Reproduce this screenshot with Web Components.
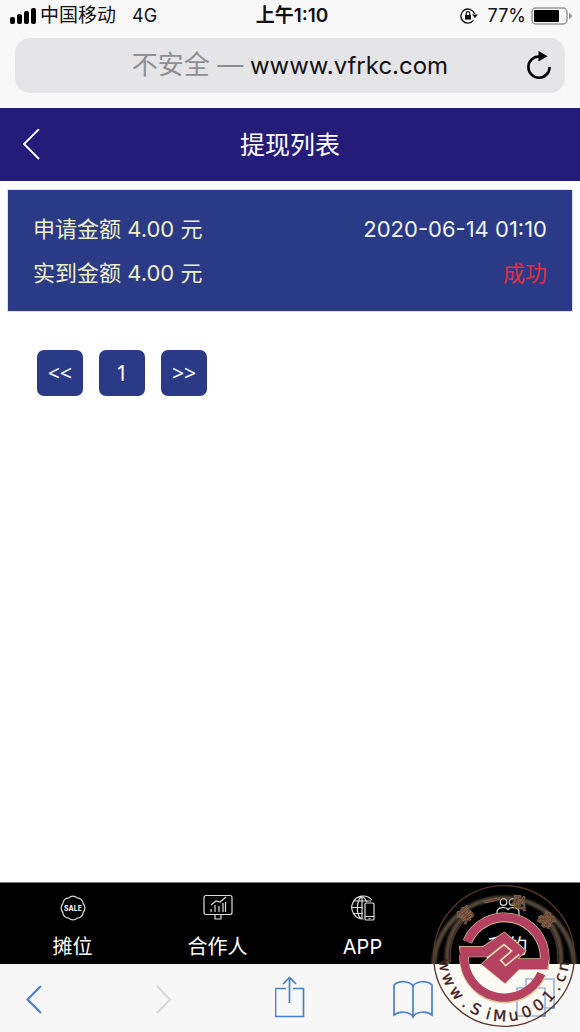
<!DOCTYPE html>
<html lang="zh-CN">
<head>
<meta charset="utf-8">
<meta name="viewport" content="width=device-width, initial-scale=1">
<title>提现列表</title>
<style>
  body { margin: 0; background: #fff; font-family: Inter, "Noto Sans CJK SC", sans-serif; }
</style>
</head>
<body>
<app-screen>
  <status-bar slot="top" carrier="中国移动" network="4G" time="上午1:10" battery="77%"></status-bar>
  <address-bar slot="top" note="不安全 —" host="wwww.vfrkc.com"></address-bar>
  <page-header slot="top">提现列表</page-header>
  <record-card>
    <span slot="apply">申请金额 4.00 元</span>
    <span slot="date">2020-06-14 01:10</span>
    <span slot="paid">实到金额 4.00 元</span>
    <span slot="state">成功</span>
  </record-card>
  <page-nav></page-nav>
  <tab-bar slot="bottom">
    <tab-item icon="sale">摊位</tab-item>
    <tab-item icon="board">合作人</tab-item>
    <tab-item icon="globe">APP</tab-item>
    <tab-item icon="people">我的</tab-item>
  </tab-bar>
  <browser-tools slot="bottom"></browser-tools>
  <seal-mark slot="bottom"></seal-mark>
</app-screen>

<script>
const define = (name, render) => customElements.define(name, class extends HTMLElement {
  constructor() {
    super();
    this.attachShadow({ mode: "open" }).innerHTML = render(this);
  }
});

define("app-screen", () => `
  <style>
    :host { display: flex; flex-direction: column; min-height: 100vh; position: relative; }
    main { flex: 1; padding: 9px 8px; }
  </style>
  <slot name="top"></slot>
  <main><slot></slot></main>
  <slot name="bottom"></slot>`);

define("status-bar", el => `
  <style>
    :host { display: grid; grid-template-columns: 1fr auto 1fr; align-items: center; height: 32px;
      padding: 0 8px 0 12px; background: #f8f8f8; color: #111; font-size: 18px; line-height: 32px; }
    div { display: flex; align-items: center; }
    .net { margin-left: 16px; }
    .carrier { font-size: 19px; margin-left: 4px; }
    .time { font-size: 19px; font-weight: 600; }
    .right { justify-content: flex-end; }
    .lock { margin-right: 10px; }
    .cell { margin-left: 5px; }
    svg { display: block; }
    .bars { margin-left: -3px; }
  </style>
  <div>
    <svg class="bars" width="27" height="16" viewBox="0 0 27 16" aria-hidden="true"><rect x="1" y="9" width="5" height="7" rx="2"/><rect x="8" y="6" width="5" height="10" rx="2"/><rect x="15" y="3" width="5" height="13" rx="2"/><rect x="22" y="0" width="5" height="16" rx="2"/></svg>
    <span class="carrier">${el.getAttribute("carrier")}</span><span class="net">${el.getAttribute("network")}</span>
  </div>
  <div class="time">${el.getAttribute("time")}</div>
  <div class="right">
    <svg class="lock" width="18" height="16" viewBox="0 0 18 16" fill="none" stroke="#111" aria-hidden="true"><path d="M14.6 6A7 7 0 1 0 13.5 12.3" stroke-width="1.4"/><path d="M12 6.5h6l-3 3.6z" fill="#111" stroke="none"/><rect x="5" y="7" width="6" height="4.6" fill="#111" stroke="none"/><path d="M6.2 7V5.5a1.8 1.8 0 0 1 3.6 0V7" stroke-width="1.2"/></svg>
    <span>${el.getAttribute("battery")}</span>
    <svg class="cell" width="41" height="18" viewBox="0 0 41 18" aria-hidden="true"><rect x="1" y="1" width="35" height="16" rx="4" fill="none" stroke="#999" stroke-width="1.5"/><rect x="3" y="3" width="25" height="12" rx="1"/><path d="M38 6v6q3-1 3-3t-3-3z" fill="#999"/></svg>
  </div>`);

define("address-bar", el => `
  <style>
    :host { display: block; padding: 6px 15px 15px; background: #f8f8f8; }
    .field { display: flex; align-items: center; height: 55px; border-radius: 15px; background: #e5e5e7; }
    button { border: 0; padding: 0; background: none; font: inherit; color: #111; }
    .url { flex: 1; padding-left: 52px; font-size: 24px; line-height: 40px; white-space: nowrap; }
    .url span { color: #8e8e93; font-size: 26px; }
    .reload { padding: 8px 13px; }
    svg { display: block; }
  </style>
  <div class="field">
    <button class="url" type="button"><span>${el.getAttribute("note")}</span> ${el.getAttribute("host")}</button>
    <button class="reload" type="button" aria-label="重新载入"><svg width="26" height="30" viewBox="0 0 26 30"><path d="M13 5.5A10.6 10.6 0 1 0 23.6 16" fill="none" stroke="#000" stroke-width="2.6"/><path d="M12.5 0 21.5 5.3 12.5 10.5z"/></svg></button>
  </div>`);

define("page-header", () => `
  <style>
    :host { display: grid; grid-template-columns: 60px 1fr 60px; align-items: center; height: 73px;
      background: #241c78; color: #fff; }
    h1 { margin: 0; font-size: 25px; line-height: 36px; font-weight: 400; text-align: center; }
    a { display: block; padding: 12px 22px; }
    svg { display: block; }
  </style>
  <a href="#back" aria-label="返回"><svg width="18" height="32" viewBox="0 0 18 32"><path d="M17 0 2 15 17 30" fill="none" stroke="#fff" stroke-width="1.8"/></svg></a>
  <h1><slot></slot></h1>`);

define("record-card", () => `
  <style>
    :host { display: grid; grid-template-columns: 1fr auto; padding: 17px 25px 16px; box-shadow: 0 0 0 1px #dce0f0;
      background: #2b3a87; color: #eef0c8; font-size: 22px; line-height: 44px; }
    .end { text-align: right; color: #eef4ea; }
    .state { color: #e02f3c; }
  </style>
  <div><slot name="apply"></slot></div><div class="end"><slot name="date"></slot></div>
  <div><slot name="paid"></slot></div><div class="end state"><slot name="state"></slot></div>`);

define("page-nav", () => `
  <style>
    :host { display: block; padding: 39px 29px; }
    nav { display: flex; gap: 16px; }
    a { width: 46px; border-radius: 7px; background: #2b3a87; color: #fff; font-size: 21px; line-height: 46px;
      text-align: center; text-decoration: none; font-family: "Noto Sans", sans-serif; }
  </style>
  <nav aria-label="分页"><a href="#prev">&lt;&lt;</a><a href="#1">1</a><a href="#next">&gt;&gt;</a></nav>`);

define("tab-bar", () => `
  <style>
    :host { display: grid; grid-template-columns: repeat(4, 1fr); height: 81px; border-top: 1px solid #777; background: #000; }
  </style>
  <slot></slot>`);

/* Outline of a round badge with n shallow lobes. */
const lobes = (n, r) => {
  const at = i => [14 + r * Math.sin(i * 2 * Math.PI / n), 14 - r * Math.cos(i * 2 * Math.PI / n)].map(v => v.toFixed(2)).join(" ");
  let d = "M" + at(.5);
  for (let i = 1; i <= n; i++) d += "A6 6 0 0 1 " + at(i + .5);
  return d + "z";
};
const icons = {
  sale: `<path d="${lobes(8, 11)}"/><text x="14" y="17" text-anchor="middle" fill="#fff" stroke="none" font-family="Inter, sans-serif" font-weight="700" font-size="7">SALE</text>`,
  board: `<rect x="0" y="1.5" width="28" height="19" rx="2"/><path d="M11 21v4h6v-4M7 11l5-4 4 1 6-5M7 18v-3M11 18v-7M15 18v-6M19 18V9M21.500 18V8"/>`,
  globe: `<path d="M14.500 25A11.500 11.500 0 1 1 23 6M13 2C7 7 7 20 12 25M13 2v23M13 2c3 2 4 4 5 6M4 7h18M2 13.500h12M4 19.500h10"/><rect x="16" y="9" width="9" height="17" rx="1"/><path d="M16 22.500h9M19.500 24.500h2"/>`,
  people: `<circle cx="9.500" cy="8" r="3.300"/><circle cx="18.500" cy="8" r="3.300"/><path d="M3 22v-4c0-5 9-6 11-2M25 22v-4c0-5-9-6-11-2M3 22h22"/>`
};

define("tab-item", el => `
  <style>
    :host { display: block; }
    a { display: flex; flex-direction: column; align-items: center; padding-top: 11px; color: #fff;
      font-size: 20px; line-height: 30px; text-decoration: none; font-weight: 400; }
    svg { display: block; overflow: visible; margin-bottom: 10px; }
  </style>
  <a href="#${el.getAttribute("icon")}"><svg width="28" height="28" viewBox="0 0 28 28" fill="none" stroke="#ddd" stroke-width="1.2" aria-hidden="true">${icons[el.getAttribute("icon")]}</svg><slot></slot></a>`);

define("browser-tools", () => `
  <style>
    :host { display: flex; justify-content: space-between; align-items: center; height: 68px; padding: 0 25px 0 26px;
      box-sizing: border-box; background: #f7f7f7; }
    button { display: flex; justify-content: center; width: 40px; border: 0; padding: 0; background: none; color: #4a7fc9; }
    .back { justify-content: flex-start; }
    svg { display: block; fill: none; stroke: currentColor; stroke-width: 1.7; }
    .off { color: #d8d8da; }
  </style>
  <button class="back" type="button" aria-label="后退"><svg width="16" height="46" viewBox="0 0 16 46"><path d="M15 11 1.500 24.500 15 38" stroke-width="2.2"/></svg></button>
  <button class="off" type="button" aria-label="前进" disabled><svg width="32" height="46" viewBox="0 0 32 46"><path d="M5 11 18 24.500 5 38" stroke-width="2.2"/></svg></button>
  <button type="button" aria-label="分享"><svg width="32" height="46" viewBox="0 0 32 46"><path d="M11 13.500H.500v28h28v-28H18M14.500 28V2.500M8 9l6.500-6.500L21 9"/></svg></button>
  <button type="button" aria-label="书签"><svg width="40" height="46" viewBox="0 0 40 46"><path d="M20 11c-3-5-14-6-19-1v30c5-4 16-4 19 2 3-6 14-6 19-2V10c-5-5-16-4-19 1zM20 11v31"/></svg></button>
  <button type="button" aria-label="标签页"><svg width="40" height="46" viewBox="0 0 40 46"><path d="M11 12V4h28v29h-9M2 13h28v28H2z"/></svg></button>`);

/* Letters of the site name round the lower rim: angle from straight down, and advance in em. */
const rim = [["w", -81, .82], ["w", -67, .82], ["w", -52, .82], [".", -39, .32], ["S", -28, .63], ["i", -15, .28], ["M", -4, .86],
  ["u", 9, .63], ["0", 22, .64], ["0", 35, .64], ["1", 48, .64], [".", 59, .32], ["c", 69, .55], ["n", 80, .63]];
const rimText = (size, radius) => {
  const xs = [], ys = [], turns = [];
  for (const [, deg, adv] of rim) {
    const a = deg * Math.PI / 180, half = adv * size / 2;
    xs.push((237 + radius * Math.sin(a) - half * Math.cos(a)).toFixed(1));
    ys.push((243 + radius * Math.cos(a) + half * Math.sin(a)).toFixed(1));
    turns.push(-deg);
  }
  return `<text x="${xs.join(" ")}" y="${ys.join(" ")}" rotate="${turns.join(" ")}" font-family="'DejaVu Sans', sans-serif" font-size="${size}" fill="#3f211c" stroke="#3f211c" stroke-width="1">${rim.map(l => l[0]).join("")}</text>`;
};

define("seal-mark", () => `
  <style>
    :host { position: absolute; right: 4px; bottom: 4px; width: 144px; height: 144px; pointer-events: none; }
    svg { display: block; width: 100%; height: 100%; overflow: visible; }
  </style>
  <svg viewBox="21 27 432 432" role="img" aria-label="第一私募">
    <defs>
      <filter id="soft" x="-10%" y="-10%" width="120%" height="120%"><feGaussianBlur stdDeviation="3"/></filter>
      <clipPath id="top"><rect x="0" y="0" width="480" height="267"/></clipPath>
    </defs>
    <path d="M27 267A211 211 0 0 0 447 267z" fill="#fffaf0" fill-opacity=".45"/>
    <g fill="none">
      <g clip-path="url(#top)"><g stroke="#8c7a60" stroke-opacity=".6" stroke-width="14" filter="url(#soft)">
        <path d="M26 280A211 211 0 1 1 448 280M70 280A168 168 0 0 1 120 122M404 280A168 168 0 0 0 354 122"/>
      </g></g>
      <circle cx="237" cy="243" r="211" stroke="#57352c" stroke-width="4"/>
      <path d="M64 262A174 174 0 0 1 108 126M410 262A174 174 0 0 0 366 126M77 262A161 161 0 0 1 116 138M397 262A161 161 0 0 0 358 138" stroke="#57352c" stroke-width="3"/>
    </g>
    <g font-family="'Noto Sans CJK SC', sans-serif" font-size="46" text-anchor="middle" fill="#6b3a33" stroke="#85704f" stroke-width="4" paint-order="stroke">
      <text transform="translate(122 120) rotate(-42)" y="16">第</text>
      <text transform="translate(200 78) rotate(-13)" y="16">一</text>
      <text transform="translate(284 84) rotate(15)" y="16">私</text>
      <text transform="translate(363 136) rotate(48)" y="16">募</text>
    </g>
    <g transform="translate(90 90)">
      <g fill="none" stroke="#d9c99a" stroke-width="29">
        <path d="M37 110A121 121 0 0 1 269 160M28 150A121 121 0 0 0 260 207"/>
      </g>
      <path d="M14 125H85L148 82 212 137 188 162H282L280 193H192L150 235 80 178 104 155H18z" fill="#d9c99a" stroke="#d9c99a" stroke-width="4"/>
      <g fill="none" stroke="#b3415f" stroke-width="25">
        <path d="M37 110A121 121 0 0 1 269 165M28 145A121 121 0 0 0 259 206"/>
      </g>
      <path d="M15 125H85L148 82 212 137 188 162H281L277 193H192L150 235 80 178 104 155H17z" fill="#b3415f"/>
      <path d="M95 160 147 119 170 138 137 166 152 182 193 148" fill="none" stroke="#f1e4b4" stroke-width="5"/>
    </g>
    ${rimText(46, 196)}
  </svg>`);
</script>
</body>
</html>
